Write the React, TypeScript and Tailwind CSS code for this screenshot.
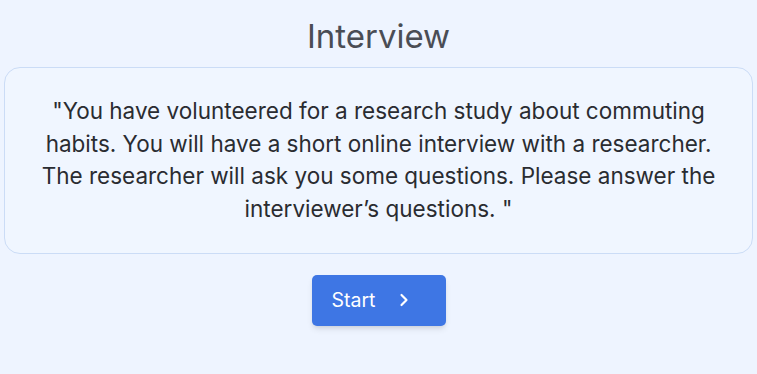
import React from 'react';
import { ChevronRight } from 'lucide-react';

const App: React.FC = () => {
  return (
    <div className="min-h-[374px] w-full bg-[#eef4ff] px-1 pt-[16px] font-['Inter',sans-serif]">
      <h1 className="text-center text-[33px] leading-[40px] text-[#4a4d55]">Interview</h1>
      <div className="mt-[11px] rounded-2xl border border-[#cbdcf6] bg-[#f0f6ff] px-8 py-[27px] text-center text-[22.5px] leading-[32.7px] text-[#2a2c31]">
        "You have volunteered for a research study about commuting habits. You will have a short online interview with a researcher. The researcher will ask you some questions. Please answer the interviewer’s questions. "
      </div>
      <div className="mt-[21px] flex justify-center">
        <button className="flex h-[51px] w-[134px] items-center rounded-[5px] bg-[#3e76e4] pl-5 text-[19.5px] text-white shadow-md">
          <span>Start</span>
          <ChevronRight size={20} strokeWidth={2.6} className="ml-[19px]" />
        </button>
      </div>
    </div>
  );
};

export default App;
